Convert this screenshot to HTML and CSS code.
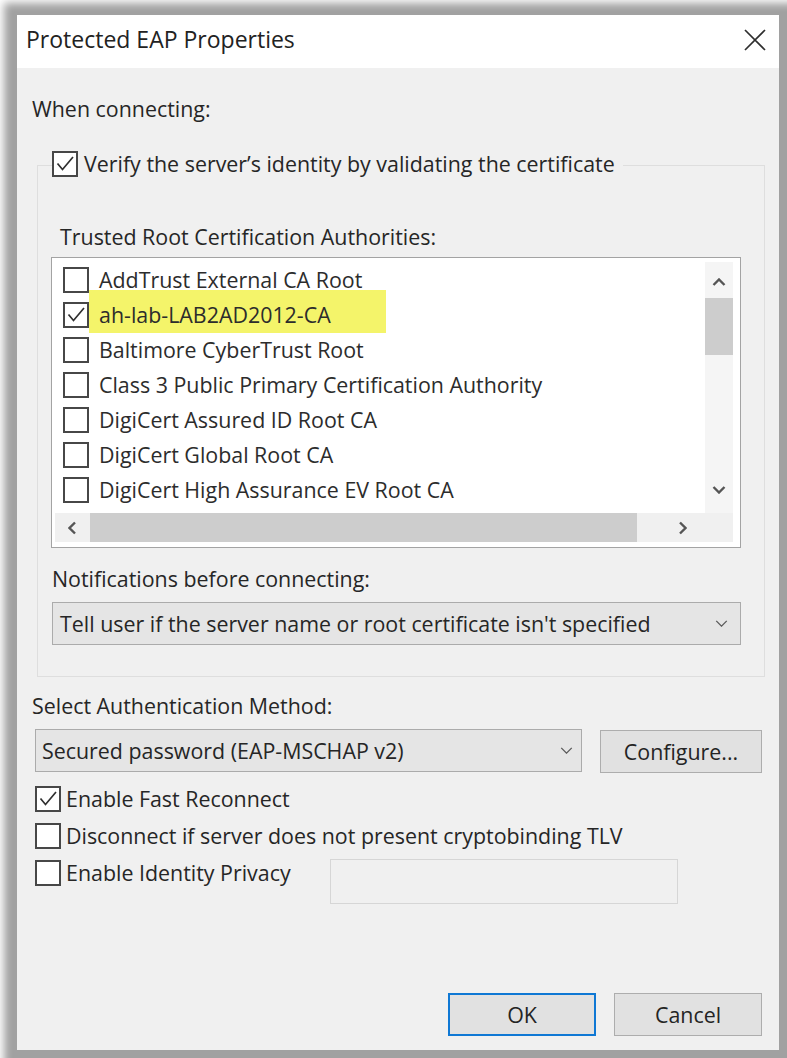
FILE: index.html
```html
<!DOCTYPE html>
<html lang="en">
<head>
<meta charset="utf-8">
<title>Protected EAP Properties</title>
<link rel="stylesheet" href="styles.css">
</head>
<body>
<div class="dialog">
  <header class="titlebar">
    <span class="title">Protected EAP Properties</span>
    <svg class="close" viewBox="0 0 24 24" aria-label="Close"><path d="M2 2L22 22M22 2L2 22"/></svg>
  </header>

  <main class="content">
    <div class="label top-label">When connecting:</div>

    <section class="group">
      <label class="check verify">
        <span class="box"><svg class="tick" viewBox="0 0 22 22"><path d="M3.5 10.5L8.5 16.5L19 4"/></svg></span>
        <span>Verify the server’s identity by validating the certificate</span>
      </label>

      <div class="label trusted">Trusted Root Certification Authorities:</div>

      <div class="listbox">
        <ul class="items">
          <li class="item"><span class="box"></span><span class="item-text">AddTrust External CA Root</span></li>
          <li class="item"><span class="box"><svg class="tick" viewBox="0 0 22 22"><path d="M3.5 10.5L8.5 16.5L19 4"/></svg></span><span class="item-text marked">ah-lab-LAB2AD2012-CA</span></li>
          <li class="item"><span class="box"></span><span class="item-text">Baltimore CyberTrust Root</span></li>
          <li class="item"><span class="box"></span><span class="item-text">Class 3 Public Primary Certification Authority</span></li>
          <li class="item"><span class="box"></span><span class="item-text">DigiCert Assured ID Root CA</span></li>
          <li class="item"><span class="box"></span><span class="item-text">DigiCert Global Root CA</span></li>
          <li class="item"><span class="box"></span><span class="item-text">DigiCert High Assurance EV Root CA</span></li>
        </ul>

        <div class="vscroll">
          <div class="sb-btn sb-up"><svg class="arrow" viewBox="0 0 14 8"><path d="M1.5 7L7 1.5L12.5 7"/></svg></div>
          <div class="vthumb"></div>
          <div class="sb-fill"></div>
          <div class="sb-btn sb-down"><svg class="arrow" viewBox="0 0 14 8"><path d="M1.5 1L7 6.5L12.5 1"/></svg></div>
        </div>

        <div class="hscroll">
          <div class="sb-btn sb-left"><svg class="arrow-h" viewBox="0 0 8 14"><path d="M7 1.5L1.5 7L7 12.5"/></svg></div>
          <div class="hthumb"></div>
          <div class="sb-fill"></div>
          <div class="sb-btn sb-right"><svg class="arrow-h" viewBox="0 0 8 14"><path d="M1 1.5L6.5 7L1 12.5"/></svg></div>
        </div>

        <div class="corner"></div>
      </div>

      <div class="label notif">Notifications before connecting:</div>
      <div class="select select-notify">
        <span>Tell user if the server name or root certificate isn't specified</span>
        <svg class="chev" viewBox="0 0 14 8"><path d="M1 1L7 7L13 1"/></svg>
      </div>
    </section>

    <div class="label method">Select Authentication Method:</div>
    <div class="method-row">
      <div class="select select-method">
        <span>Secured password (EAP-MSCHAP v2)</span>
        <svg class="chev" viewBox="0 0 14 8"><path d="M1 1L7 7L13 1"/></svg>
      </div>
      <button class="btn configure" type="button">Configure...</button>
    </div>

    <div class="options">
      <label class="check">
        <span class="box"><svg class="tick" viewBox="0 0 22 22"><path d="M3.5 10.5L8.5 16.5L19 4"/></svg></span>
        <span>Enable Fast Reconnect</span>
      </label>
      <label class="check">
        <span class="box"></span>
        <span>Disconnect if server does not present cryptobinding TLV</span>
      </label>
      <div class="privacy-row">
        <label class="check privacy">
          <span class="box"></span>
          <span>Enable Identity Privacy</span>
        </label>
        <div class="textfield"></div>
      </div>
    </div>

    <div class="actions">
      <button class="btn ok" type="button">OK</button>
      <button class="btn" type="button">Cancel</button>
    </div>
  </main>
</div>
</body>
</html>
```

FILE: styles.css
```css
* {
  box-sizing: border-box;
}

html,
body {
  margin: 0;
  height: 100%;
}

/* grey backdrop with the soft light fade on its outer top/left edge */
body {
  background: #a1a1a1;
  box-shadow: inset 9px 8px 9px -5px #ffffff;
  padding: 15px 8px 8px 17px;
  font-family: "Open Sans", "Noto Sans", sans-serif;
  font-size: 21.4px;
  color: #262626;
  overflow: hidden;
}

.dialog {
  width: 762px;
  height: 1035px;
  background: #f0f0f0;
  display: flex;
  flex-direction: column;
}

/* title bar */
.titlebar {
  height: 53px;
  flex: none;
  background: #ffffff;
  display: flex;
  align-items: flex-start;
  justify-content: space-between;
  padding: 10px 12px 0 9px;
}

.title {
  font-size: 23px;
  line-height: 28px;
  color: #222222;
}

.close {
  width: 24px;
  height: 24px;
  margin-top: 3px;
  fill: none;
  stroke: #2e2e2e;
  stroke-width: 1.7;
}

/* dialog body */
.content {
  flex: 1;
  display: flex;
  flex-direction: column;
  align-items: flex-start;
  padding: 0 14px 14px 15px;
}

.label {
  line-height: 28px;
  white-space: nowrap;
}

.top-label {
  margin-top: 27px;
}

/* group box */
.group {
  align-self: stretch;
  margin: 42px 0 0 5px;
  border: 1px solid #dedede;
  padding: 0 0 31px 0;
  display: flex;
  flex-direction: column;
  align-items: flex-start;
}

/* checkboxes */
.check {
  display: flex;
  align-items: center;
  gap: 5px;
  height: 28px;
  line-height: 28px;
  white-space: nowrap;
}

.box {
  width: 26px;
  height: 26px;
  flex: none;
  border: 2px solid #474747;
  background: #ffffff;
  display: flex;
  align-items: center;
  justify-content: center;
}

.tick {
  width: 22px;
  height: 22px;
  fill: none;
  stroke: #2f2f2f;
  stroke-width: 1.7;
}

.verify {
  margin: -16px 0 0 14px;
  padding-right: 8px;
  gap: 6px;
  background: #f0f0f0;
}

.trusted {
  margin: 45px 0 0 22px;
}

/* certificate list */
.listbox {
  margin: 6px 0 0 13px;
  width: 690px;
  height: 291px;
  border: 1px solid #a3a3a3;
  background: #ffffff;
  padding: 4px 7px 5px 3px;
  display: grid;
  grid-template-columns: 1fr 28px;
  grid-template-rows: 1fr 29px;
}

.items {
  grid-row: 1;
  grid-column: 1;
  list-style: none;
  margin: 0;
  padding: 0;
  overflow: hidden;
}

.item {
  display: flex;
  align-items: center;
  height: 35px;
  padding-left: 8px;
  white-space: nowrap;
}

.item-text {
  line-height: 35px;
  padding-left: 10px;
  color: #2c2c2c;
}

.item-text.marked {
  align-self: flex-start;
  width: 297px;
  margin: -7px 0 -1px 0;
  padding: 7px 0 1px 10px;
  background: #f4f46a;
}

/* scroll bars */
.vscroll {
  grid-row: 1;
  grid-column: 2;
  display: flex;
  flex-direction: column;
  background: #f5f5f5;
}

.sb-btn {
  flex: none;
  display: flex;
  justify-content: center;
}

.sb-up {
  height: 36px;
  align-items: flex-start;
  padding-top: 16px;
}

.sb-down {
  height: 36px;
  align-items: flex-start;
  padding-top: 9px;
}

.sb-fill {
  flex: 1;
}

.vthumb {
  height: 57px;
  flex: none;
  background: #cdcdcd;
}

.arrow {
  width: 14px;
  height: 8px;
  fill: none;
  stroke: #555555;
  stroke-width: 2.4;
}

.hscroll {
  grid-row: 2;
  grid-column: 1;
  display: flex;
  background: #f0f0f0;
}

.sb-left,
.sb-right {
  width: 34px;
  align-items: center;
}

.sb-right {
  padding-right: 10px;
}

.hthumb {
  width: 547px;
  margin-left: 1px;
  flex: none;
  background: #cdcdcd;
}

.arrow-h {
  width: 8px;
  height: 14px;
  fill: none;
  stroke: #555555;
  stroke-width: 2.4;
}

.corner {
  grid-row: 2;
  grid-column: 2;
  background: #f0f0f0;
}

.notif {
  margin: 17px 0 0 14px;
}

/* drop-down lists */
.select {
  height: 43px;
  display: flex;
  align-items: center;
  justify-content: space-between;
  background: #e5e5e5;
  border: 1px solid #ababab;
  line-height: 28px;
  white-space: nowrap;
}

.chev {
  width: 13px;
  height: 7px;
  flex: none;
  fill: none;
  stroke: #5a5a5a;
  stroke-width: 1.5;
}

.select-notify {
  width: 689px;
  margin: 9px 0 0 14px;
  padding: 0 12px 0 7px;
}

.method {
  margin-top: 15px;
}

.method-row {
  display: flex;
  align-items: flex-start;
  margin: 9px 0 0 3px;
}

.select-method {
  width: 547px;
  padding: 0 8px 0 6px;
}

/* push buttons */
.btn {
  font: inherit;
  color: #242424;
  background: #e1e1e1;
  border: 1px solid #adadad;
  height: 43px;
  width: 148px;
  padding: 0;
  line-height: 28px;
}

.configure {
  width: 162px;
  margin: 1px 0 0 18px;
}

.ok {
  border: 2px solid #0f78d4;
}

/* option checkboxes */
.options {
  margin: 12px 0 0 3px;
  display: flex;
  flex-direction: column;
  gap: 9px;
}

.privacy-row {
  display: flex;
  align-items: flex-start;
}

.privacy {
  width: 295px;
}

.textfield {
  width: 348px;
  height: 45px;
  border: 1px solid #d6d6d6;
  background: #f0f0f0;
}

.actions {
  margin-top: auto;
  align-self: flex-end;
  margin-right: 3px;
  display: flex;
  gap: 18px;
}
```
